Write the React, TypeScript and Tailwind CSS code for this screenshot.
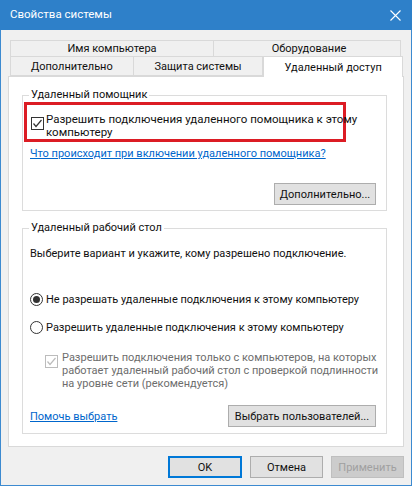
import React from 'react';

const font = { fontFamily: 'Roboto, "Noto Sans", sans-serif' };

function CheckBox({ disabled = false }: { disabled?: boolean }) {
  const c = disabled ? '#bcbcbc' : '#333333';
  return (
    <svg width="13" height="13" viewBox="0 0 13 13" className="shrink-0">
      <rect x="0.5" y="0.5" width="12" height="12" fill="#ffffff" stroke={c} />
      <path d="M2.5 6.5 L5 9.5 L10.5 3" fill="none" stroke={c} strokeWidth="1.2" />
    </svg>
  );
}

function Radio({ checked }: { checked: boolean }) {
  return (
    <svg width="13" height="13" viewBox="0 0 13 13" className="shrink-0">
      <circle cx="6.5" cy="6.5" r="6" fill="#ffffff" stroke="#333333" />
      {checked && <circle cx="6.5" cy="6.5" r="3.5" fill="#333333" />}
    </svg>
  );
}

function Btn({ children, w, primary = false, disabled = false }: { children: React.ReactNode; w: string; primary?: boolean; disabled?: boolean }) {
  return (
    <button
      className={`${w} h-[22px] text-[11px] leading-none whitespace-nowrap shrink-0 ${
        primary
          ? 'bg-[#e1e1e1] border-2 border-[#0078d7] text-[#111]'
          : disabled
          ? 'bg-[#cccccc] border border-[#bfbfbf] text-[#a0a0a0]'
          : 'bg-[#e1e1e1] border border-[#adadad] text-[#111]'
      }`}
    >
      {children}
    </button>
  );
}

export default function App() {
  return (
    <div style={font} className="w-[412px] h-[486px] bg-[#f0f0f0] border-x border-b border-[#3c8ad0] text-[11px] text-[#111] flex flex-col whitespace-nowrap">
      {/* title bar */}
      <div className="h-[30px] bg-[#2e80c9] -mx-px flex items-center justify-between pl-[10px] pr-[11px] text-white">
        <span className="text-[11.5px]">Свойства системы</span>
        <svg width="11" height="11" viewBox="0 0 11 11">
          <path d="M0.5 0.5 L10.5 10.5 M10.5 0.5 L0.5 10.5" stroke="#ffffff" strokeWidth="1.1" />
        </svg>
      </div>

      {/* tabs */}
      <div className="mt-[10px] pl-[8px] pr-[8px]">
        <div className="ml-px w-[391px] flex h-[17px] text-[#111]">
          <div className="w-[204px] border border-[#d9d9d9] bg-[#f0f0f0] flex items-center justify-center leading-none">Имя компьютера</div>
          <div className="flex-1 border border-l-0 border-[#d9d9d9] bg-[#f0f0f0] flex items-center justify-center leading-none pl-[4px]">Оборудование</div>
        </div>
        <div className="ml-px flex h-[19px] relative z-10">
          <div className="w-[124px] border border-t-0 border-[#d9d9d9] flex items-center justify-center leading-none">Дополнительно</div>
          <div className="w-[130px] border border-l-0 border-t-0 border-[#d9d9d9] flex items-center justify-center leading-none">Защита системы</div>
          <div className="w-[140px] h-[21px] -mt-px bg-white border border-b-0 border-[#d9d9d9] flex items-center justify-center leading-none">Удаленный доступ</div>
        </div>

        {/* panel */}
        <div className="-ml-px w-[396px] h-[371px] bg-white border border-[#d9d9d9] pl-[13px] pr-[16px] pt-[11px]">
          <fieldset className="min-w-0 border border-[#dcdcdc] px-0 pb-[5px]">
            <legend className="ml-[6px] px-[2px] leading-[14px]">Удаленный помощник</legend>
            <div className="ml-px w-[322px] h-[40px] border-[3px] border-[#dc1c24] flex items-start pl-[4px] pt-[9px] gap-[2px] leading-[13px] text-[11.5px]">
              <div className="pt-[3px]"><CheckBox /></div>
              <div className="-mt-[1px]">Разрешить подключения удаленного помощника к этому<br />компьютеру</div>
            </div>
            <div className="ml-[7px] mt-[5px] leading-[13px] text-[#0066cc] underline">Что происходит при включении удаленного помощника?</div>
            <div className="flex justify-end mr-[10px] mt-[23px]">
              <Btn w="w-[102px]">Дополнительно...</Btn>
            </div>
          </fieldset>

          <fieldset className="min-w-0 mt-[10px] border border-[#dcdcdc] px-0 pb-[6px]">
            <legend className="ml-[6px] px-[2px] leading-[14px]">Удаленный рабочий стол</legend>
            <div className="ml-[7px] mt-[12px] leading-[13px]">Выберите вариант и укажите, кому разрешено подключение.</div>
            <div className="ml-[7px] mt-[33px] flex items-center gap-[3px] leading-[13px]">
              <Radio checked />
              <span>Не разрешать удаленные подключения к этому компьютеру</span>
            </div>
            <div className="ml-[7px] mt-[15px] flex items-center gap-[3px] leading-[13px]">
              <Radio checked={false} />
              <span>Разрешить удаленные подключения к этому компьютеру</span>
            </div>
            <div className="ml-[22px] mt-[17px] flex items-start gap-[4px] leading-[13px] text-[#6d6d6d]">
              <div className="pt-[4px]"><CheckBox disabled /></div>
              <div>Разрешить подключения только с компьютеров, на которых<br />работает удаленный рабочий стол с проверкой подлинности<br />на уровне сети (рекомендуется)</div>
            </div>
            <div className="mt-[15px] flex items-center justify-between pl-[7px] pr-[10px]">
              <span className="text-[#0066cc] underline leading-[13px]">Помочь выбрать</span>
              <Btn w="w-[148px]">Выбрать пользователей...</Btn>
            </div>
          </fieldset>
        </div>

        {/* dialog buttons */}
        <div className="mt-[9px] flex justify-end gap-[8px] -mr-[1px]">
          <Btn w="w-[74px]" primary>OK</Btn>
          <Btn w="w-[73px]">Отмена</Btn>
          <Btn w="w-[73px]" disabled>Применить</Btn>
        </div>
      </div>
    </div>
  );
}
